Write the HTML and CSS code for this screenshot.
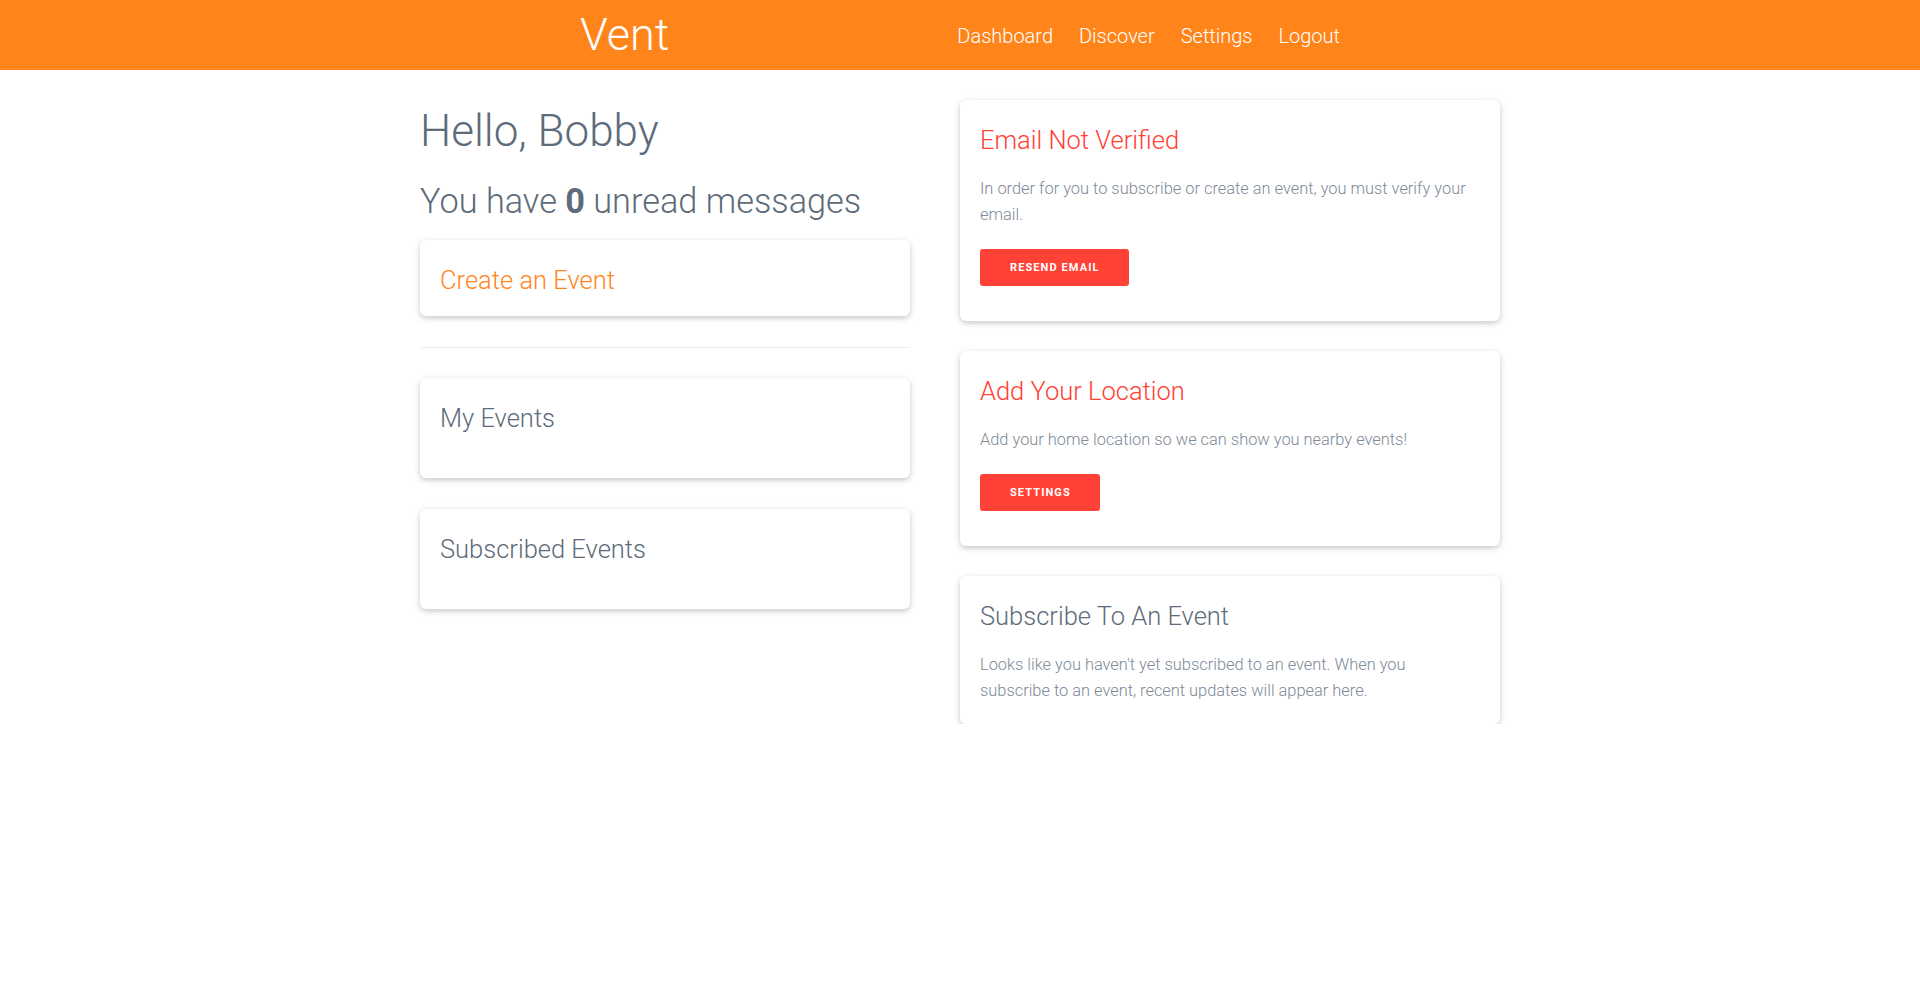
FILE: index.html
```html
<!DOCTYPE html>
<html lang="en">
<head>
<meta charset="utf-8">
<title>Vent</title>
<link rel="stylesheet" href="styles.css">
</head>
<body>
<header class="topbar">
  <div class="topbar-inner">
    <a class="brand" href="#">Vent</a>
    <nav class="nav">
      <a href="#">Dashboard</a>
      <a href="#">Discover</a>
      <a href="#">Settings</a>
      <a href="#">Logout</a>
    </nav>
  </div>
</header>
<main class="container">
  <section class="col-left">
    <h1 class="greeting">Hello, Bobby</h1>
    <h2 class="unread">You have <b>0</b> unread messages</h2>
    <div class="card">
      <h3 class="card-title orange">Create an Event</h3>
    </div>
    <hr class="divider">
    <div class="card">
      <h3 class="card-title">My Events</h3>
      <div class="card-empty"></div>
    </div>
    <div class="card">
      <h3 class="card-title">Subscribed Events</h3>
      <div class="card-empty"></div>
    </div>
  </section>
  <section class="col-right">
    <div class="card">
      <h3 class="card-title red">Email Not Verified</h3>
      <p class="card-text">In order for you to subscribe or create an event, you must verify your email.</p>
      <a class="btn" href="#">Resend Email</a>
    </div>
    <div class="card">
      <h3 class="card-title red">Add Your Location</h3>
      <p class="card-text">Add your home location so we can show you nearby events!</p>
      <a class="btn" href="#">Settings</a>
    </div>
    <div class="card">
      <h3 class="card-title">Subscribe To An Event</h3>
      <p class="card-text narrow">Looks like you haven't yet subscribed to an event. When you subscribe to an event, recent updates will appear here.</p>
    </div>
  </section>
</main>
</body>
</html>
```

FILE: styles.css
```css
* { box-sizing: border-box; }
html, body { margin: 0; padding: 0; }
body {
  font-family: Roboto, "Liberation Sans", sans-serif;
  font-weight: 300;
  background: #fff;
  color: #5d6b7a;
}
a { text-decoration: none; }

.topbar {
  background: #ff851b;
  height: 70px;
}
.topbar-inner {
  width: 760px;
  margin: 0 auto;
  height: 70px;
  display: flex;
  align-items: center;
  justify-content: space-between;
}
.brand {
  color: #fff;
  font-size: 45px;
  font-weight: 300;
  line-height: 70px;
}
.nav {
  display: flex;
  gap: 26px;
  padding-top: 2px;
}
.nav a {
  color: #fff;
  font-size: 20px;
  font-weight: 300;
}

.container {
  width: 1080px;
  margin: 0 auto;
  display: grid;
  grid-template-columns: 490px 540px;
  gap: 50px;
  padding-top: 30px;
  align-items: start;
}
.col-left, .col-right {
  display: flex;
  flex-direction: column;
}
.col-right { gap: 30px; }

.greeting {
  margin: 6.5px 0 0;
  font-size: 44px;
  font-weight: 300;
  line-height: 48px;
  color: #5d6b7a;
}
.unread {
  margin: 28.5px 0 20px;
  font-size: 34.3px;
  font-weight: 300;
  line-height: 37px;
  color: #5d6b7a;
}
.unread b { font-weight: 700; }

.card {
  background: #fff;
  border-radius: 6px;
  box-shadow: 0 2px 5px rgba(0,0,0,0.16), 0 2px 10px rgba(0,0,0,0.08);
  padding: 24px 20px 20px;
}
.col-left .card + .card { margin-top: 31px; }

.card-title {
  margin: 0;
  font-size: 25.5px;
  font-weight: 300;
  line-height: 32px;
  color: #5d6b7a;
}
.card-title.orange { color: #ff851b; }
.card-title.red { color: #ff4136; }
.card-empty { height: 24px; }

.divider {
  border: 0;
  border-top: 1px solid #eeeeee;
  margin: 31px 0 30px;
}

.card-text {
  margin: 20px 0 0;
  font-size: 16.4px;
  line-height: 26px;
  color: #7d8a97;
}
.card-text.narrow { max-width: 450px; }

.btn {
  display: inline-flex;
  align-self: flex-start;
  align-items: center;
  height: 37px;
  margin: 21px 0 15px;
  padding: 0 29px 0 30px;
  background: #ff4136;
  color: #fff;
  border-radius: 3px;
  font-size: 11px;
  font-weight: 700;
  letter-spacing: 1.1px;
  text-transform: uppercase;
}
.col-right .card { display: flex; flex-direction: column; }
```
